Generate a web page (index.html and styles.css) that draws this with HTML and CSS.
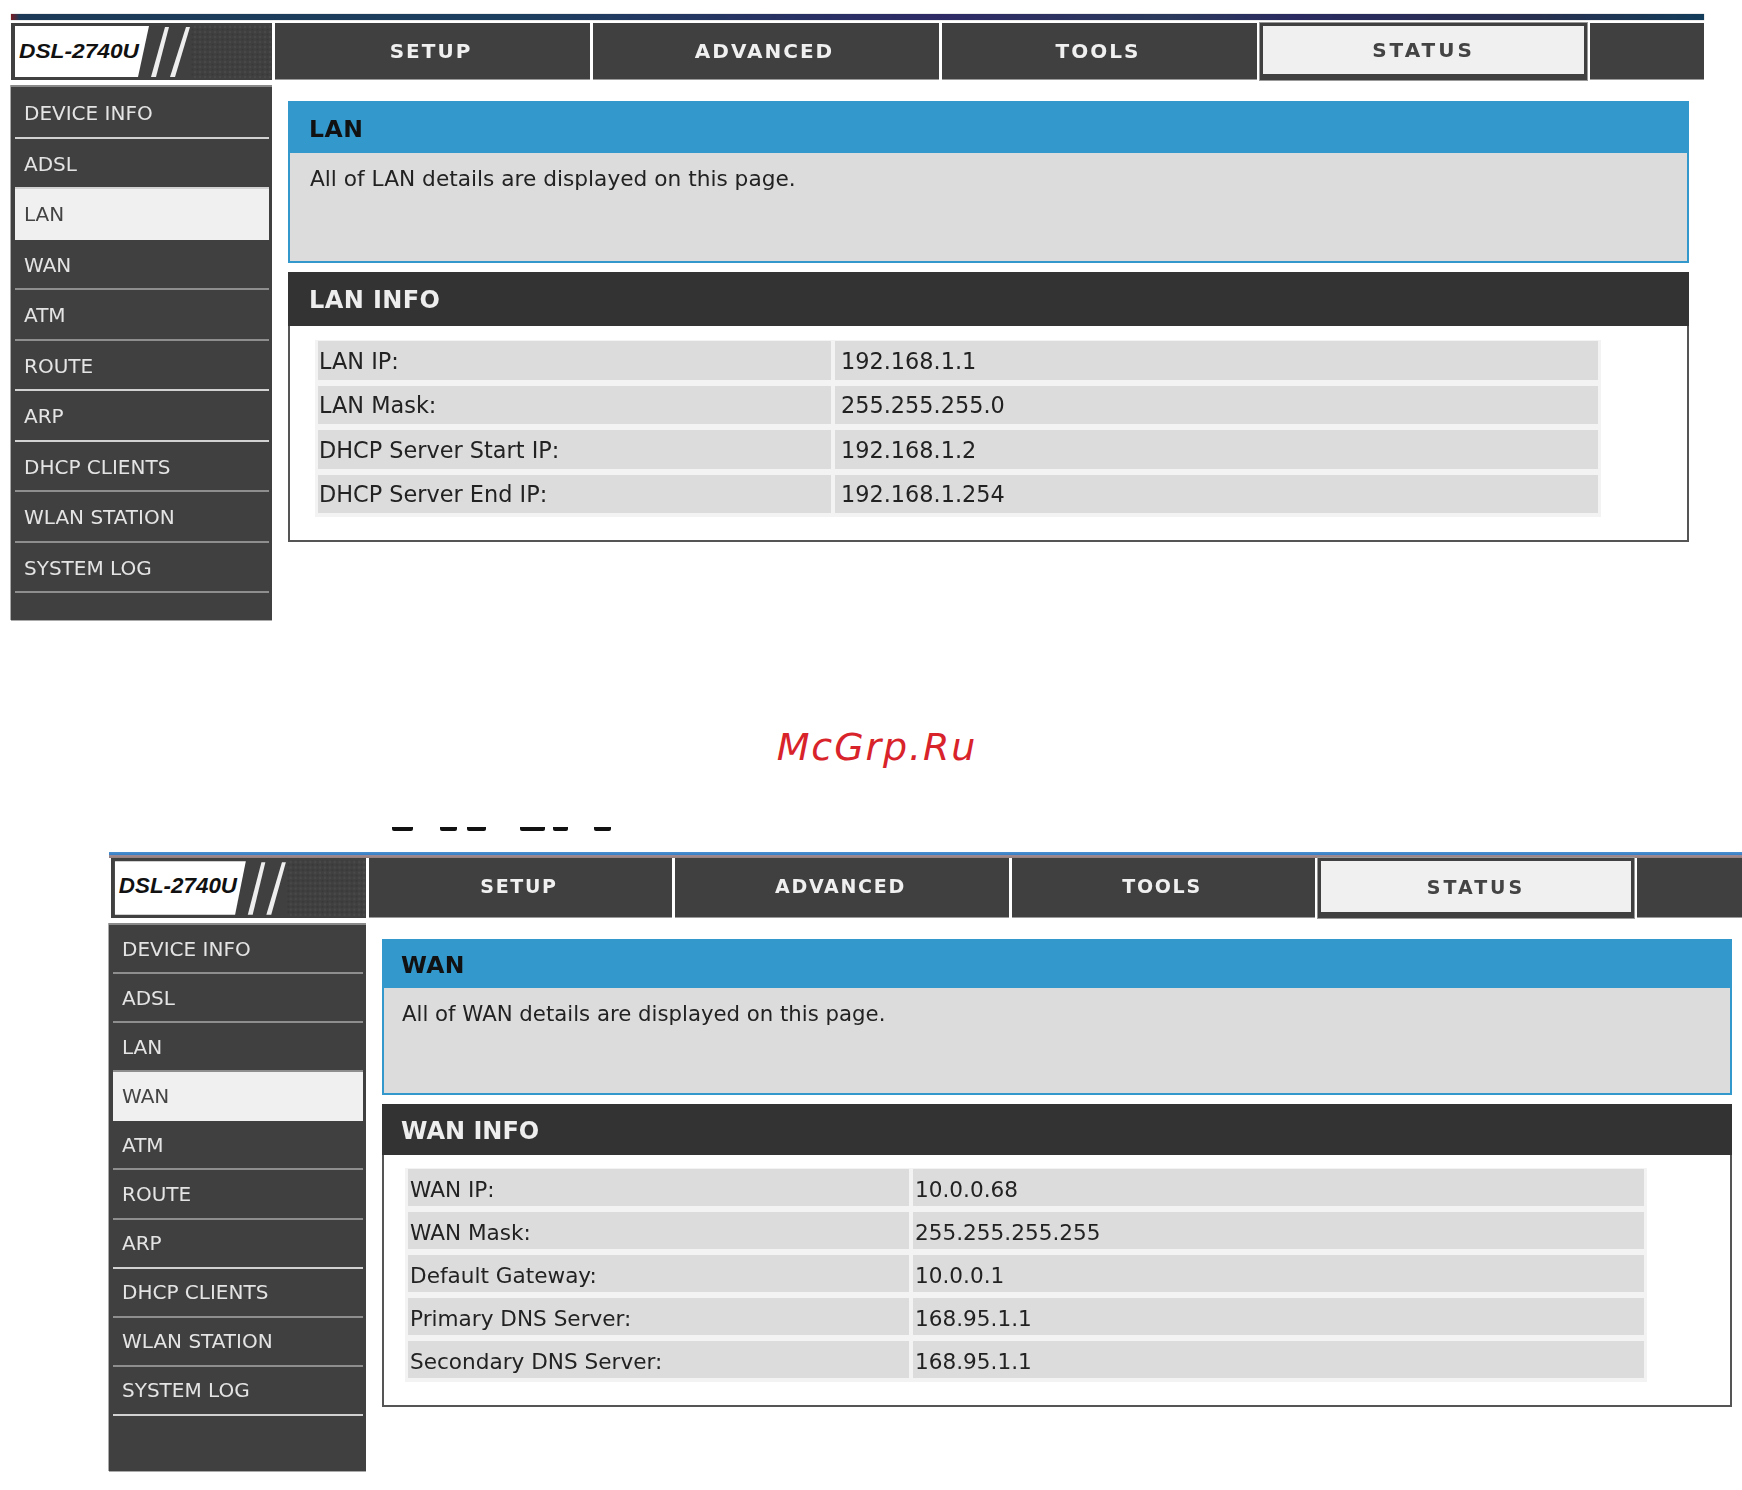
FILE: index.html
```html
<!DOCTYPE html>
<html lang="en">
<head>
<meta charset="utf-8">
<title>DSL-2740U status pages</title>
<link rel="stylesheet" href="styles.css">
</head>
<body>
<section class="screen screen-lan">
  <div class="topbar"></div>
  <div class="head">
    <div class="logo">
      <svg viewBox="0 0 261 57" preserveAspectRatio="none" class="logo-svg">
        <defs>
          <pattern id="dots-a" width="5" height="5" patternUnits="userSpaceOnUse"><circle cx="1.5" cy="1.5" r="1.1" fill="#383838"/><circle cx="4" cy="4" r="1" fill="#4b4b4b"/></pattern>
        </defs>
        <rect x="180" y="2" width="81" height="53" fill="url(#dots-a)"/>
        <polygon points="4,3 138,3 127,54 4,54" fill="#fff"/>
        <polygon points="154,4 158,4 145,54 140,54" fill="#eee"/>
        <polygon points="175,4 179,4 164,54 159,54" fill="#eee"/>
        <text x="8" y="35" class="logo-text" textLength="120" lengthAdjust="spacingAndGlyphs">DSL-2740U</text>
      </svg>
    </div>
    <a class="tab">SETUP</a>
    <a class="tab">ADVANCED</a>
    <a class="tab">TOOLS</a>
    <a class="tab tab-active"><span>STATUS</span></a>
    <div class="tab"></div>
  </div>
  <div class="body">
    <nav class="side">
      <a class="item bright">DEVICE INFO</a>
      <a class="item bright">ADSL</a>
      <a class="item item-active">LAN</a>
      <a class="item">WAN</a>
      <a class="item">ATM</a>
      <a class="item bright">ROUTE</a>
      <a class="item bright">ARP</a>
      <a class="item">DHCP CLIENTS</a>
      <a class="item">WLAN STATION</a>
      <a class="item">SYSTEM LOG</a>
    </nav>
    <main class="main">
      <div class="intro">
        <h1 class="intro-title">LAN</h1>
        <p class="intro-text">All of LAN details are displayed on this page.</p>
      </div>
      <div class="info">
        <h2 class="info-title">LAN INFO</h2>
        <div class="info-body">
          <div class="rows">
            <div class="cell label">LAN IP:</div><div class="cell value">192.168.1.1</div>
            <div class="cell label">LAN Mask:</div><div class="cell value">255.255.255.0</div>
            <div class="cell label">DHCP Server Start IP:</div><div class="cell value">192.168.1.2</div>
            <div class="cell label">DHCP Server End IP:</div><div class="cell value">192.168.1.254</div>
          </div>
        </div>
      </div>
    </main>
  </div>
</section>

<div class="watermark">McGrp.Ru</div>

<div class="scraps" aria-hidden="true"><i class="s1"></i><i class="s2"></i><i class="s3"></i><i class="s4"></i><i class="s5"></i><i class="s6"></i></div>

<section class="screen screen-wan">
  <div class="topbar"></div>
  <div class="head">
    <div class="logo">
      <svg viewBox="0 0 261 57" preserveAspectRatio="none" class="logo-svg">
        <defs>
          <pattern id="dots-b" width="5" height="5" patternUnits="userSpaceOnUse"><circle cx="1.5" cy="1.5" r="1.1" fill="#383838"/><circle cx="4" cy="4" r="1" fill="#4b4b4b"/></pattern>
        </defs>
        <rect x="180" y="2" width="81" height="53" fill="url(#dots-b)"/>
        <polygon points="4,3 138,3 127,54 4,54" fill="#fff"/>
        <polygon points="154,4 158,4 145,54 140,54" fill="#eee"/>
        <polygon points="175,4 179,4 164,54 159,54" fill="#eee"/>
        <text x="8" y="33" class="logo-text" textLength="121" lengthAdjust="spacingAndGlyphs">DSL-2740U</text>
      </svg>
    </div>
    <a class="tab">SETUP</a>
    <a class="tab">ADVANCED</a>
    <a class="tab">TOOLS</a>
    <a class="tab tab-active"><span>STATUS</span></a>
    <div class="tab"></div>
  </div>
  <div class="body">
    <nav class="side">
      <a class="item">DEVICE INFO</a>
      <a class="item">ADSL</a>
      <a class="item">LAN</a>
      <a class="item item-active">WAN</a>
      <a class="item">ATM</a>
      <a class="item">ROUTE</a>
      <a class="item bright">ARP</a>
      <a class="item">DHCP CLIENTS</a>
      <a class="item">WLAN STATION</a>
      <a class="item bright">SYSTEM LOG</a>
    </nav>
    <main class="main">
      <div class="intro">
        <h1 class="intro-title">WAN</h1>
        <p class="intro-text">All of WAN details are displayed on this page.</p>
      </div>
      <div class="info">
        <h2 class="info-title">WAN INFO</h2>
        <div class="info-body">
          <div class="rows">
            <div class="cell label">WAN IP:</div><div class="cell value">10.0.0.68</div>
            <div class="cell label">WAN Mask:</div><div class="cell value">255.255.255.255</div>
            <div class="cell label">Default Gateway:</div><div class="cell value">10.0.0.1</div>
            <div class="cell label">Primary DNS Server:</div><div class="cell value">168.95.1.1</div>
            <div class="cell label">Secondary DNS Server:</div><div class="cell value">168.95.1.1</div>
          </div>
        </div>
      </div>
    </main>
  </div>
</section>
</body>
</html>
```
FILE: styles.css
```css
* { box-sizing: border-box; }
html, body { margin: 0; padding: 0; background: #fff; }
body {
  width: 1742px;
  height: 1490px;
  overflow: hidden;
  font-family: "DejaVu Sans", sans-serif;
  color: #222;
}

.screen { filter: blur(0.75px); }

.screen-lan {
  margin-left: 11px;
  padding-top: 14px;
  width: 1693px;
  --cols: 261px 315px 346px 315px 327px 114px;
  --head-h: 57px;
  --item-h: 50.5px;
  --item-pt: 2px;
  --side-w: 261px;
  --side-h: 535px;
  --side-pad: 3px;
  --main-w: 1401px;
  --intro-h: 162px;
  --intro-head: 52px;
  --info-head: 54px;
  --info-h: 270px;
  --rows-w: 1286px;
  --rows-left: 25px;
  --rows-top: 14px;
  --col1: 513px;
  --row-h: 38.5px;
  --row-gap: 6px;
  --cell-font: 22.4px;
  --cell-pt: 1px;
  --label-pl: 1px;
  --value-pl: 6px;
  --title-pl: 21px;
  --text-pl: 20px;
  --intro-font: 21.7px;
  --intro-top: 12px;
  --tab-font: 20px;
  --tab-ls: 2px;
  --tab-shift: 2px;
  --tab-right: 3px;
  --title-ls: 0.4px;
  --intro-ls: 0.6px;
  --bar: linear-gradient(90deg, #7a1a20 0, #1c3a58 0.5%, #1d3f5f 30%, #2e2a66 55%, #2b3a5c 68%, #2a2a60 76%, #28304f 90%, #123c5a 100%);
}

.screen-wan {
  margin-left: 109px;
  width: 1633px;
  --cols: 257px 303px 334px 303px 316px 105px;
  --head-h: 60px;
  --item-h: 49.1px;
  --item-pt: 0px;
  --side-w: 257px;
  --side-h: 548px;
  --side-pad: 2px;
  --main-w: 1350px;
  --intro-h: 156px;
  --intro-head: 49px;
  --info-head: 51px;
  --info-h: 303px;
  --rows-w: 1242px;
  --rows-left: 21px;
  --rows-top: 13px;
  --col1: 501px;
  --row-h: 37px;
  --row-gap: 6px;
  --cell-font: 21.6px;
  --cell-pt: 4px;
  --label-pl: 2px;
  --value-pl: 2px;
  --title-pl: 19px;
  --text-pl: 18px;
  --intro-font: 21.25px;
  --intro-top: 12px;
  --tab-font: 19px;
  --tab-ls: 1.7px;
  --tab-shift: 4px;
  --tab-right: 3px;
  --title-ls: 0;
  --intro-ls: 0.3px;
  --bar: linear-gradient(180deg, #4a8fd0 0, #3a7fc4 50%, #a98a8a 60%, #8d7d7d 100%);
}

.topbar { height: 6px; background: var(--bar); }
.screen-lan .topbar { margin-bottom: 3px; box-shadow: 0 0 1px #888; }

.head {
  display: grid;
  grid-template-columns: var(--cols);
  column-gap: 3px;
  height: var(--head-h);
}
.logo { background: #404040; margin-left: 2px; }
.screen-lan .logo { margin-left: 0; }
.logo-svg { display: block; width: 100%; height: 100%; }
.logo-text {
  font-family: "Liberation Sans", sans-serif;
  font-weight: 700;
  font-style: italic;
  font-size: 21px;
  fill: #111;
}

.tab {
  display: flex;
  align-items: center;
  justify-content: center;
  padding: 0 var(--tab-right) var(--tab-shift) 0;
  background: #404040;
  color: #f0f0f0;
  font-weight: 700;
  font-size: var(--tab-font);
  letter-spacing: var(--tab-ls);
  box-shadow: inset 0 -1px 0 #9a9a9a;
}
.tab-active { padding: 3px 3px 6px; box-shadow: 0 0 0 1px #999; letter-spacing: 3px; }
.tab-active span {
  flex: 1;
  align-self: stretch;
  display: flex;
  align-items: center;
  justify-content: center;
  background: #f0f0f0;
  color: #444;
}

.body { display: flex; align-items: flex-start; margin-top: 5px; }

.side {
  flex: none;
  width: var(--side-w);
  height: var(--side-h);
  padding: var(--side-pad) 3px 0 4px;
  background: #404040;
  box-shadow: -1px 0 0 #aaa, 0 1px 0 #aaa, inset 0 2px 0 #8a8a8a;
}
.item {
  display: flex;
  align-items: center;
  height: var(--item-h);
  padding: var(--item-pt) 0 0 9px;
  color: #e4e4e4;
  font-size: 20px;
  border-bottom: 2px solid #8e8e8e;
}
.item.bright { border-bottom-color: #d2d2d2; }
.item-active {
  background: #f0f0f0;
  color: #444;
  border-bottom-color: #f0f0f0;
}

.main { flex: none; width: var(--main-w); margin: 16px 0 0 16px; }

.intro {
  height: var(--intro-h);
  border: 2px solid #3399cc;
  background: #dcdcdc;
}
.intro-title {
  margin: -2px -2px 0;
  height: var(--intro-head);
  padding: 3px 0 0 var(--title-pl);
  display: flex;
  align-items: center;
  background: #3399cc;
  color: #111;
  font-size: 23.5px;
  font-weight: 700;
  letter-spacing: var(--intro-ls);
}
.intro-text {
  margin: 0;
  padding: var(--intro-top) 0 0 var(--text-pl);
  font-size: var(--intro-font);
  line-height: 28px;
  color: #222;
}

.info { margin-top: 9px; height: var(--info-h); display: flex; flex-direction: column; }
.info-title {
  flex: none;
  margin: 0;
  height: var(--info-head);
  padding: 2px 0 0 var(--title-pl);
  display: flex;
  align-items: center;
  background: #333;
  color: #eee;
  font-size: 24px;
  font-weight: 700;
  letter-spacing: var(--title-ls);
}
.info-body {
  flex: 1;
  padding: var(--rows-top) 0 0 var(--rows-left);
  border: 2px solid #555;
  border-top: 0;
  background: #fff;
}
.rows {
  width: var(--rows-w);
  display: grid;
  grid-template-columns: var(--col1) 1fr;
  grid-auto-rows: var(--row-h);
  gap: var(--row-gap) 4px;
  padding: 1px 3px 4px;
  background: #f3f3f3;
}
.cell {
  display: flex;
  align-items: center;
  padding-top: var(--cell-pt);
  background: #dcdcdc;
  font-size: var(--cell-font);
  color: #222;
  white-space: nowrap;
}
.label { padding-left: var(--label-pl); }
.value { padding-left: var(--value-pl); }

.watermark {
  margin-top: 102px;
  height: 50px;
  line-height: 50px;
  padding-left: 12px;
  text-align: center;
  font-size: 38px;
  font-style: italic;
  letter-spacing: 1.9px;
  color: #d9232b;
}

.scraps {
  display: flex;
  height: 5px;
  margin: 55px 0 20px 392px;
}
.scraps i { display: block; height: 4px; background: #111; border-radius: 0 0 2px 2px; }
.s1 { width: 21px; }
.s2 { width: 17px; margin-left: 27px; }
.s3 { width: 19px; margin-left: 10px; }
.s4 { width: 25px; margin-left: 34px; }
.s5 { width: 15px; margin-left: 8px; }
.s6 { width: 17px; margin-left: 26px; }
```
